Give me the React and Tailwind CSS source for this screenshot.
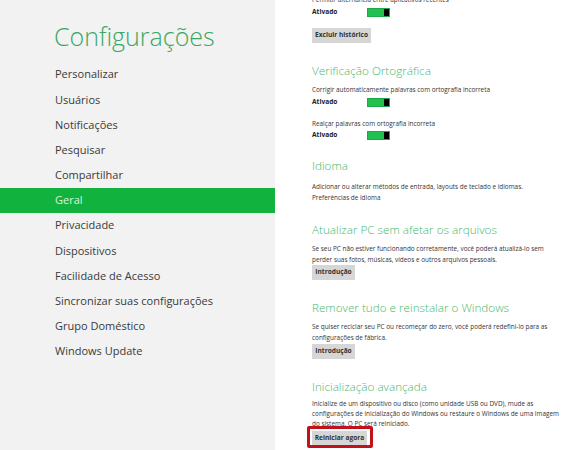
import React from "react";

const menu = [
  "Personalizar",
  "Usuários",
  "Notificações",
  "Pesquisar",
  "Compartilhar",
  "Geral",
  "Privacidade",
  "Dispositivos",
  "Facilidade de Acesso",
  "Sincronizar suas configurações",
  "Grupo Doméstico",
  "Windows Update",
];

const font = { fontFamily: '"Open Sans", "Noto Sans", sans-serif' };

function Toggle({ className = "" }) {
  return (
    <div className={"flex items-center h-[12px] " + className}>
      <span className="w-[55px] text-[6.6px] font-bold text-[#222] leading-none">Ativado</span>
      <div className="flex h-[9px] w-[23px] border border-[#1fa846]">
        <div className="flex-1 bg-[#22c04f]" />
        <div className="w-[5px] bg-black" />
      </div>
    </div>
  );
}

function Btn({ children, w }) {
  return (
    <div className={"flex items-center justify-center h-[15px] bg-[#d6d6d6] text-[6.6px] font-bold text-[#333] leading-none " + w}>
      {children}
    </div>
  );
}

function H({ children, className = "" }) {
  return (
    <div className={"h-[16px] text-[11.7px] font-light text-[#47b86b] leading-[16px] whitespace-nowrap " + className}>
      {children}
    </div>
  );
}

function T({ children, className = "" }) {
  return <div className={"text-[6.4px] text-[#333] whitespace-nowrap " + className}>{children}</div>;
}

export default function App() {
  return (
    <div className="flex w-[587px] h-[450px] overflow-hidden bg-white" style={font}>
      <aside className="w-[275px] shrink-0 bg-[#f2f2f2] flex flex-col">
        <h1 className="mt-[19px] pl-[54px] text-[25px] font-light text-[#3aa862] leading-[34px]">
          Configurações
        </h1>
        <nav className="mt-[9px] flex flex-col">
          {menu.map((m) => (
            <div
              key={m}
              className={
                "h-[25.2px] flex items-center pl-[55px] text-[11px] " +
                (m === "Geral" ? "bg-[#12b23f] text-[#d6f5dc]" : "text-[#3a3a3a]")
              }
            >
              {m}
            </div>
          ))}
        </nav>
      </aside>
      <main className="flex-1 pl-[37px] flex flex-col items-start overflow-hidden">
        <T className="-mt-[6px] leading-[11px] h-[11px]">Permitir alternância entre aplicativos recentes</T>
        <Toggle className="mt-[1px]" />
        <div className="mt-[10px]"><Btn w="w-[59px]">Excluir histórico</Btn></div>

        <H className="mt-[19px]">Verificação Ortográfica</H>
        <T className="mt-[6px] leading-[11px] h-[11px]">Corrigir automaticamente palavras com ortografia incorreta</T>
        <Toggle className="mt-[1px]" />
        <T className="mt-[10px] leading-[11px] h-[11px]">Realçar palavras com ortografia incorreta</T>
        <Toggle />

        <H className="mt-[16px]">Idioma</H>
        <T className="mt-[8px] leading-[11px] h-[11px]">Adicionar ou alterar métodos de entrada, layouts de teclado e idiomas.</T>
        <T className="leading-[11px] h-[11px] text-[#3fb263]">Preferências de idioma</T>

        <H className="mt-[18px]">Atualizar PC sem afetar os arquivos</H>
        <T className="mt-[7px] leading-[10.5px]">
          Se seu PC não estiver funcionando corretamente, você poderá atualizá-lo sem
          <br />
          perder suas fotos, músicas, vídeos e outros arquivos pessoais.
        </T>
        <Btn w="w-[43px]">Introdução</Btn>

        <H className="mt-[19px]">Remover tudo e reinstalar o Windows</H>
        <T className="mt-[7px] leading-[10.5px]">
          Se quiser reciclar seu PC ou recomeçar do zero, você poderá redefini-lo para as
          <br />
          configurações de fábrica.
        </T>
        <div className="mt-[1px]"><Btn w="w-[43px]">Introdução</Btn></div>

        <H className="mt-[19px]">Inicialização avançada</H>
        <T className="mt-[5px] leading-[10px]">
          Inicialize de um dispositivo ou disco (como unidade USB ou DVD), mude as
          <br />
          configurações de inicialização do Windows ou restaure o Windows de uma imagem
          <br />
          do sistema. O PC será reiniciado.
        </T>
        <div className="relative mt-[2px]">
          <Btn w="w-[55px]">Reiniciar agora</Btn>
          <div className="absolute -left-[5px] -top-[5px] -right-[6px] -bottom-[2px] border-[3px] border-[#c0121b] rounded-[2px]" />
        </div>
      </main>
    </div>
  );
}
